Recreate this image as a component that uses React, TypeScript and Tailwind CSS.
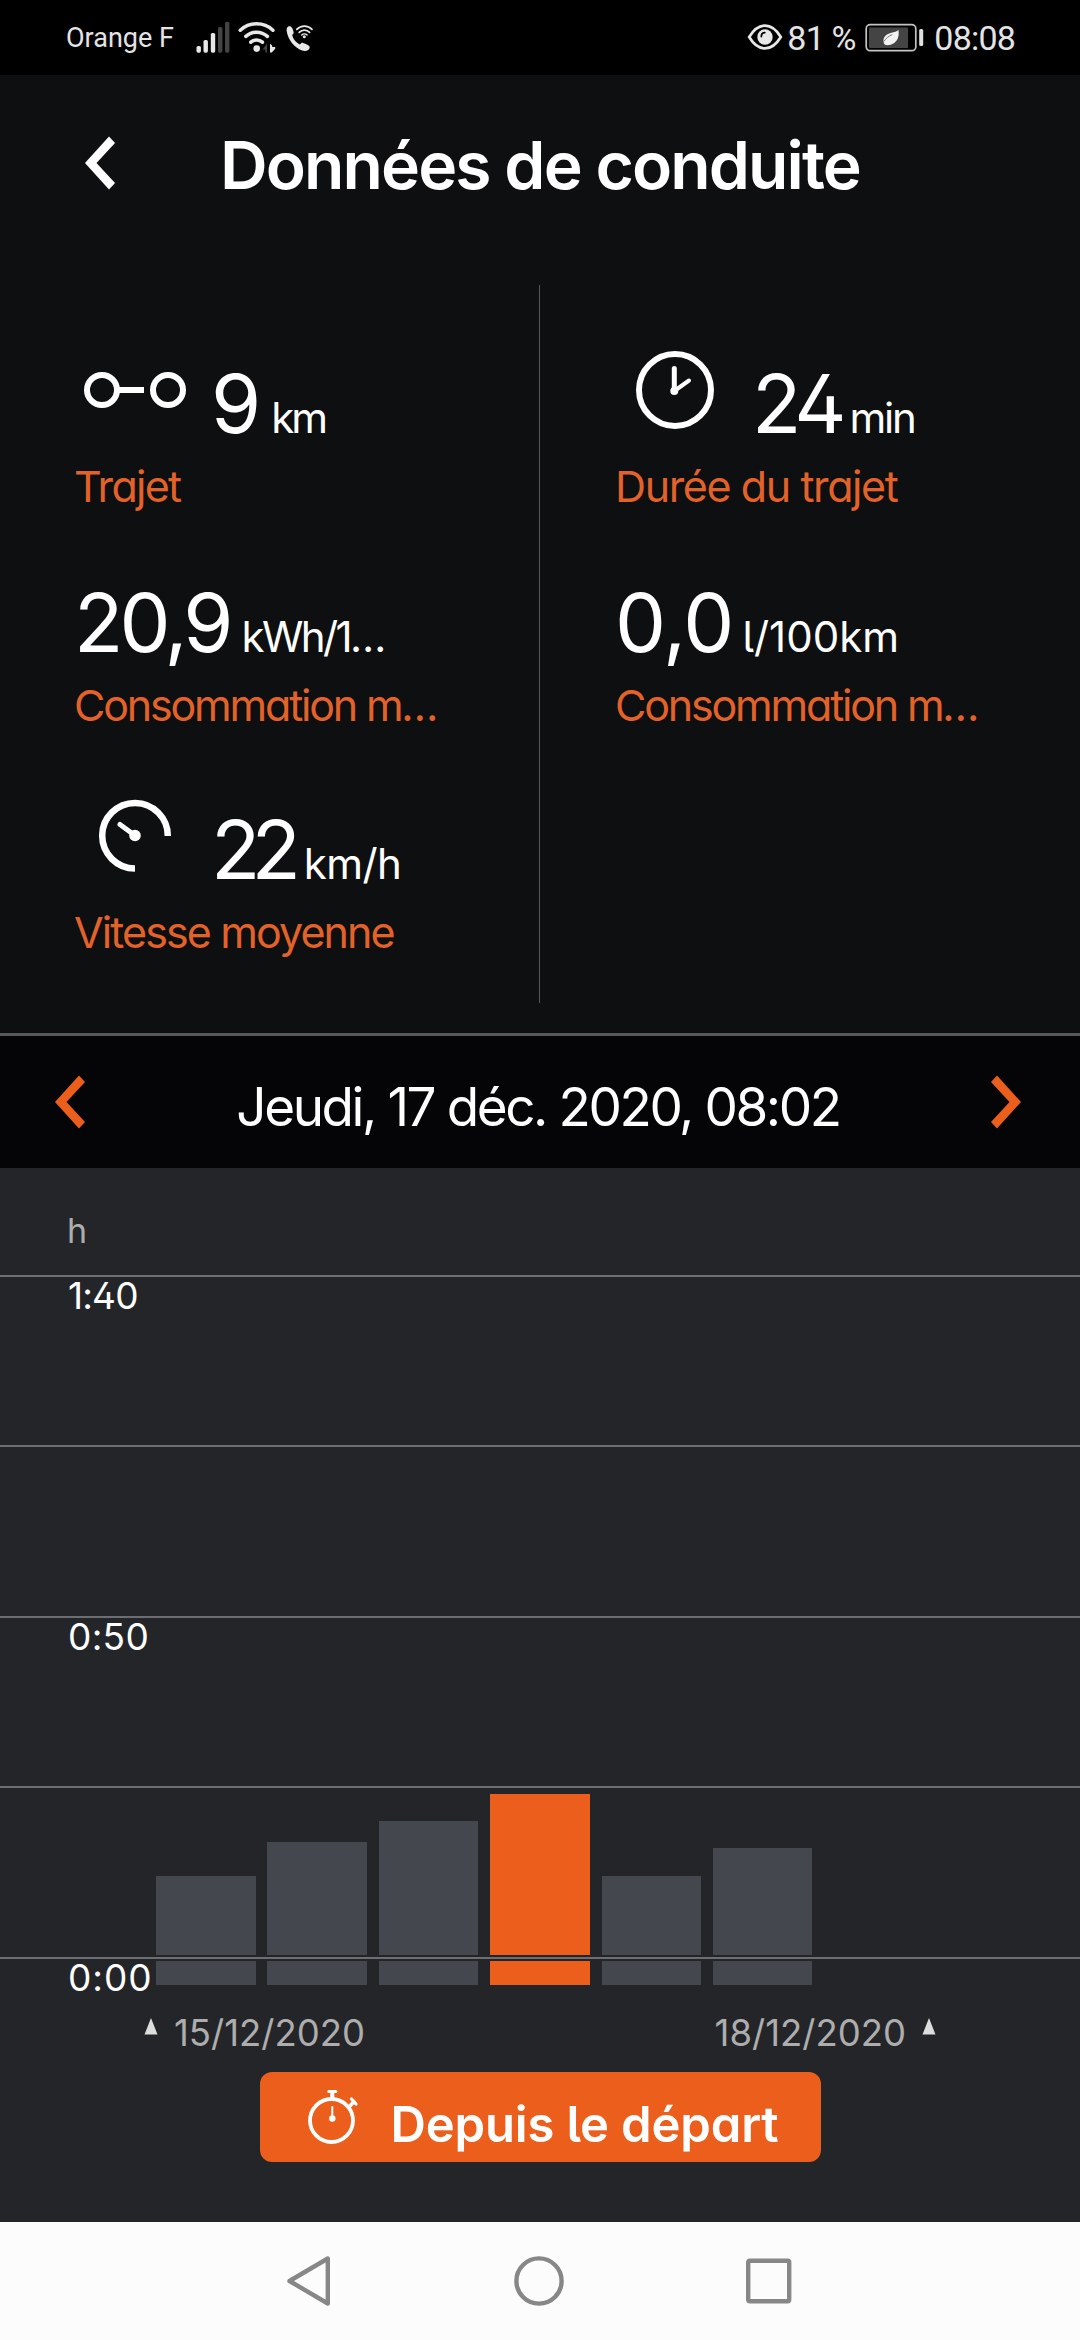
import type { ReactNode } from "react";

const GRID_TOP = 108;
const GRID_STEP = 170.5;

const trips = [
  { id: 1, height: 79 },
  { id: 2, height: 113 },
  { id: 3, height: 134 },
  { id: 4, height: 161, active: true },
  { id: 5, height: 79 },
  { id: 6, height: 107 },
];

const gridLines = [
  { label: "1:40", spacing: "tracking-[-0.8px]" },
  { label: "", spacing: "" },
  { label: "0:50", spacing: "tracking-[0.3px]" },
  { label: "", spacing: "" },
  { label: "0:00", spacing: "tracking-[1px]" },
];

function StatusBar() {
  return (
    <div className="flex h-[75px] items-start bg-black font-[Roboto,sans-serif] text-[#e4e4e4]">
      <div className="ml-[66px] mt-[22px] w-[130px] text-[27px] leading-[32px]">Orange F</div>
      <svg className="mt-[20px]" width="36" height="34" viewBox="0 0 36 34" fill="#e8e8e8">
        <rect x="0.5" y="26" width="4.4" height="6.7" rx="1.6" />
        <rect x="7.5" y="20" width="4.4" height="12.7" rx="1.6" />
        <rect x="14.8" y="13" width="4.4" height="19.7" rx="1.6" />
        <rect x="22" y="7" width="4.4" height="25.7" rx="1.6" fill="#444" />
        <rect x="29" y="1.8" width="4.4" height="30.9" rx="1.6" fill="#444" />
      </svg>
      <svg className="ml-[5px] mt-[20px]" width="40" height="34" viewBox="0 0 40 34" fill="none" stroke="#e8e8e8" strokeWidth="3.6" strokeLinecap="round">
        <path d="M3.3 10.2a24 24 0 0 1 32.6 0" />
        <path d="M8.8 16.4a16 16 0 0 1 21.6 0" />
        <path d="M13.8 22.2a8.6 8.6 0 0 1 11.6 0" />
        <circle cx="19.7" cy="28.6" r="3.3" fill="#e8e8e8" stroke="none" />
        <path d="M30 23.8v8.7h-1.6v-3h-2.8z" fill="#444" stroke="none" />
        <path d="M33 23.8l2.2 1.6v1.6h3v1.8l-3.4 3.7h-1.8z" fill="#e8e8e8" stroke="none" />
      </svg>
      <svg className="ml-[9px] mt-[23px]" width="28" height="30" viewBox="0 0 28 30" fill="none" stroke="#e8e8e8" strokeLinecap="round">
        <path
          d="M1.2 4.6C2 3.4 3.4 3 4.6 3.6c1.6.8 2.6 3.4 3 5.6.2 1-.4 1.9-1.4 2.5.6 4 4 8 7.8 9.9.8-1.2 1.8-1.9 3-1.7 2.2.4 4.6 1.6 6.2 3.2.8.9.6 2.2-.2 3.2-1.5 1.7-4.2 2.3-7 1.3C8.5 24.8 2.2 17 .8 8.8.5 7.1.6 5.6 1.2 4.6z"
          fill="#e8e8e8"
          stroke="none"
        />
        <path d="M10.8 6.4c4.2-4.4 11-4.4 15.2 0" strokeWidth="1.7" />
        <path d="M13.2 9.4c2.9-3 7.5-3 10.4 0" strokeWidth="1.7" />
        <path d="M15.7 12c1.5-1.5 3.9-1.5 5.4 0" strokeWidth="1.5" />
        <circle cx="18.3" cy="13.8" r="1.5" fill="#e8e8e8" stroke="none" />
      </svg>
      <svg className="ml-auto mt-[23px]" width="36" height="28" viewBox="0 0 36 28" fill="none">
        <path d="M2.2 14C7 6 12 2.6 18 2.6S29 6 33.8 14C29 22 24 25.4 18 25.4S7 22 2.2 14z" stroke="#e8e8e8" strokeWidth="2.7" />
        <circle cx="18" cy="14" r="7.7" fill="#e8e8e8" />
        <path d="M14.3 13.6c0-2.3 1.5-3.9 3.5-4" stroke="#000" strokeWidth="1.7" strokeLinecap="round" />
      </svg>
      <div className="ml-[4px] mt-[18px] w-[77px] whitespace-nowrap text-[34px] leading-[40px] tracking-[-0.8px]">81 %</div>
      <svg className="ml-[1px] mt-[23px]" width="60" height="30" viewBox="0 0 60 30">
        <rect x="1.2" y="1.7" width="49.6" height="26" rx="4" fill="none" stroke="#c4c4c4" strokeWidth="1.7" />
        <rect x="4" y="4.5" width="39" height="20.5" rx="1" fill="#444" />
        <path d="M33.5 7c.8 6-.6 10.5-4.6 13.2-3 1.9-6.2 2.4-9 1.6C17.5 18 18 13.8 22.5 11.2 26.5 9.3 30.5 9.4 33.5 7z" fill="#f2f2f2" />
        <path d="M18.8 18.5c2.2-3.3 5-5.5 8.5-7" stroke="#777" strokeWidth="1" fill="none" />
        <rect x="54.2" y="6" width="4" height="17" rx="1.5" fill="#e0e0e0" />
      </svg>
      <div className="ml-[9px] mr-[65px] mt-[18px] text-[34px] leading-[40px] tracking-[-0.8px]">08:08</div>
    </div>
  );
}

function Chevron({ className, flip = false }: { className: string; flip?: boolean }) {
  return (
    <svg className={className} width="32" height="54" viewBox="0 0 32 54" fill="currentColor">
      <path d={flip ? "M7 0.5L31 27 7 53.5 1 47 19.5 27 1 7z" : "M25 0.5L1 27 25 53.5 31 47 12.5 27 31 7z"} />
    </svg>
  );
}

function StatIcon({ children }: { children: ReactNode }) {
  return (
    <svg className="-mt-[14px] shrink-0" width="137" height="80" viewBox="-2 0 137 80" fill="none" stroke="#fff" strokeLinecap="round">
      {children}
    </svg>
  );
}

function RouteIcon() {
  return (
    <StatIcon>
      <circle cx="26" cy="40" r="15" strokeWidth="6" />
      <circle cx="92" cy="40" r="15" strokeWidth="6" />
      <path d="M41 40h27" strokeWidth="6" strokeLinecap="butt" />
    </StatIcon>
  );
}

function ClockIcon() {
  return (
    <StatIcon>
      <circle cx="58" cy="40" r="36" strokeWidth="6" />
      <path d="M57.3 18.5V41" strokeWidth="5" />
      <path d="M57.3 41L72 30.5" strokeWidth="4" />
      <circle cx="57.3" cy="41" r="4" fill="#fff" stroke="none" />
    </StatIcon>
  );
}

function SpeedIcon() {
  return (
    <StatIcon>
      <path d="M59 72.5A32.8 32.8 0 1 1 91.8 40" strokeWidth="6.5" strokeLinecap="butt" />
      <path d="M44 28.5L59 39.5" strokeWidth="5" />
      <circle cx="59" cy="39.5" r="5.8" fill="#fff" stroke="none" />
    </StatIcon>
  );
}

type StatProps = {
  icon?: ReactNode;
  value: string;
  valueClass: string;
  unit: string;
  unitClass: string;
  label: string;
  labelClass: string;
};

function Stat({ icon, value, valueClass, unit, unitClass, label, labelClass }: StatProps) {
  return (
    <div className="h-[144px] whitespace-nowrap">
      <div className="flex h-[80px]">
        {icon}
        <div className={`flex items-baseline text-[81px] leading-[80px] ${valueClass}`}>
          {value}
          <span className={`text-[42px] leading-[42px] ${unitClass}`}>{unit}</span>
        </div>
      </div>
      <div className={`mt-[21px] text-[43px] leading-[43px] text-[#e2622a] ${labelClass}`}>{label}</div>
    </div>
  );
}

function Stats() {
  return (
    <div className="mb-[30px] flex h-[718px]">
      <div className="w-[539px] pl-[74px] pt-[79px]">
        <Stat
          icon={<RouteIcon />}
          value="9"
          valueClass="tracking-[-5px]"
          unit="km"
          unitClass="ml-[15px] tracking-[-3px]"
          label="Trajet"
          labelClass="tracking-[-1.7px]"
        />
        <div className="h-[75px]" />
        <Stat
          value="20,9"
          valueClass="tracking-[-4px]"
          unit="kWh/1…"
          unitClass="ml-[12px] tracking-[-2.6px]"
          label="Consommation m…"
          labelClass="tracking-[-2.2px]"
        />
        <div className="h-[83px]" />
        <Stat
          icon={<SpeedIcon />}
          value="22"
          valueClass="tracking-[-9px]"
          unit="km/h"
          unitClass="ml-[12px] tracking-[-0.6px]"
          label="Vitesse moyenne"
          labelClass="tracking-[-1.9px]"
        />
      </div>
      <div className="w-px bg-[#555657]" />
      <div className="pl-[75px] pt-[79px]">
        <Stat
          icon={<ClockIcon />}
          value="24"
          valueClass="tracking-[-6px]"
          unit="min"
          unitClass="ml-[9px] tracking-[-2.2px]"
          label="Durée du trajet"
          labelClass="tracking-[-1.4px]"
        />
        <div className="h-[75px]" />
        <Stat
          value="0,0"
          valueClass="tracking-[-1px]"
          unit="l/100km"
          unitClass="ml-[9px] tracking-[0px]"
          label="Consommation m…"
          labelClass="tracking-[-2.2px]"
        />
      </div>
    </div>
  );
}

function Marker() {
  return (
    <svg className="mt-[7px]" width="14" height="17" viewBox="0 0 14 17">
      <path d="M7 0L13.5 16.5H0.5z" fill="#ddd" />
    </svg>
  );
}

function Chart() {
  return (
    <div className="relative h-[817px]">
      <div className="pl-[67px] pt-[43px] text-[34px] leading-[40px] text-[#adadad]">h</div>
      {gridLines.map((line, i) => (
        <div key={i} className="absolute inset-x-0" style={{ top: Math.floor(GRID_TOP - 1 + i * GRID_STEP) }}>
          <div className="h-[2px] bg-[#6c6e71]" />
          <div className={`pl-[68px] text-[37px] leading-[37px] text-white ${line.spacing}`}>{line.label}</div>
        </div>
      ))}
      <div className="absolute bottom-0 left-[156px] flex items-end gap-[11.9px]">
        {trips.map((trip) => (
          <div key={trip.id} className="flex w-[99.5px] flex-col">
            <div className={trip.active ? "bg-[#eb5e1b]" : "bg-[#45474e]"} style={{ height: trip.height }} />
            <div className="h-[6px] border-y-2 border-[#242529] bg-[#6c6e71]" />
            <div className={`h-[24px] ${trip.active ? "bg-[#eb5e1b]" : "bg-[#45474e]"}`} />
          </div>
        ))}
      </div>
    </div>
  );
}

function StopwatchIcon() {
  return (
    <svg width="52" height="56" viewBox="0 0 52 56" fill="none" stroke="#fff" strokeLinecap="round">
      <circle cx="24.5" cy="31.5" r="21.5" strokeWidth="3.8" />
      <path d="M25.3 9V3" strokeWidth="4" />
      <path d="M21.8 2.6h7" strokeWidth="3" />
      <path d="M42.5 17.5L47 12.5" strokeWidth="3.5" />
      <path d="M44.5 10L49 15" strokeWidth="3.2" />
      <path d="M25.3 18v10" strokeWidth="2" />
      <circle cx="25.3" cy="29.5" r="3.2" fill="#fff" stroke="none" />
    </svg>
  );
}

function NavBar() {
  return (
    <div className="flex h-[118px] items-center justify-between bg-[#fcfcfc] pl-[285px] pr-[286px] text-[#878787]">
      <svg width="48" height="54" viewBox="0 0 48 54" fill="none" stroke="currentColor" strokeWidth="4.4" strokeLinejoin="round">
        <path d="M42.8 4.5V49.5L4.5 27z" />
      </svg>
      <svg width="54" height="54" viewBox="0 0 54 54" fill="none" stroke="currentColor" strokeWidth="4.4">
        <circle cx="27" cy="27" r="22.6" />
      </svg>
      <svg width="50" height="50" viewBox="0 0 50 50" fill="none" stroke="currentColor" strokeWidth="4.4">
        <rect x="4.2" y="4.7" width="41" height="40.6" rx="1.5" />
      </svg>
    </div>
  );
}

export default function App() {
  return (
    <div className="flex h-[2340px] w-[1080px] flex-col overflow-hidden bg-[#0e0f11] font-[Inter,sans-serif] text-white [font-feature-settings:'cv02','cv05','cv11']">
      <StatusBar />

      <header className="flex h-[210px] items-start">
        <Chevron className="ml-[84px] mt-[61px]" />
        <h1 className="ml-[104px] mt-[57px] text-[66px] leading-[66px] font-semibold tracking-[-1.9px] whitespace-nowrap">
          Données de conduite
        </h1>
      </header>

      <Stats />

      <div className="flex h-[135px] items-start border-t-[3px] border-[#58595b] bg-[#050507]">
        <Chevron className="ml-[54px] mt-[39px] text-[#eb5e1b]" />
        <div className="mt-[43px] flex-1 text-center text-[53px] leading-[56px] tracking-[-2.4px] whitespace-nowrap">
          Jeudi, 17 déc. 2020, 08:02
        </div>
        <Chevron flip className="mr-[58px] mt-[39px] text-[#eb5e1b]" />
      </div>

      <main className="h-[1054px] bg-[#242529]">
        <Chart />
        <div className="mt-[26px] flex h-[61px] justify-between px-[144px] text-[36.5px] leading-[44px] text-[#adadad]">
          <div className="flex gap-[16px]">
            <Marker />
            15/12/2020
          </div>
          <div className="flex gap-[16px]">
            18/12/2020
            <Marker />
          </div>
        </div>
        <button className="mx-auto flex h-[90px] w-[561px] items-start rounded-[12px] bg-[#eb5e1b] pl-[47px] pt-[17px]">
          <StopwatchIcon />
          <span className="ml-[32px] mt-[10px] text-[49px] leading-[52px] font-semibold tracking-[-0.15px] whitespace-nowrap">
            Depuis le départ
          </span>
        </button>
      </main>

      <NavBar />
    </div>
  );
}
